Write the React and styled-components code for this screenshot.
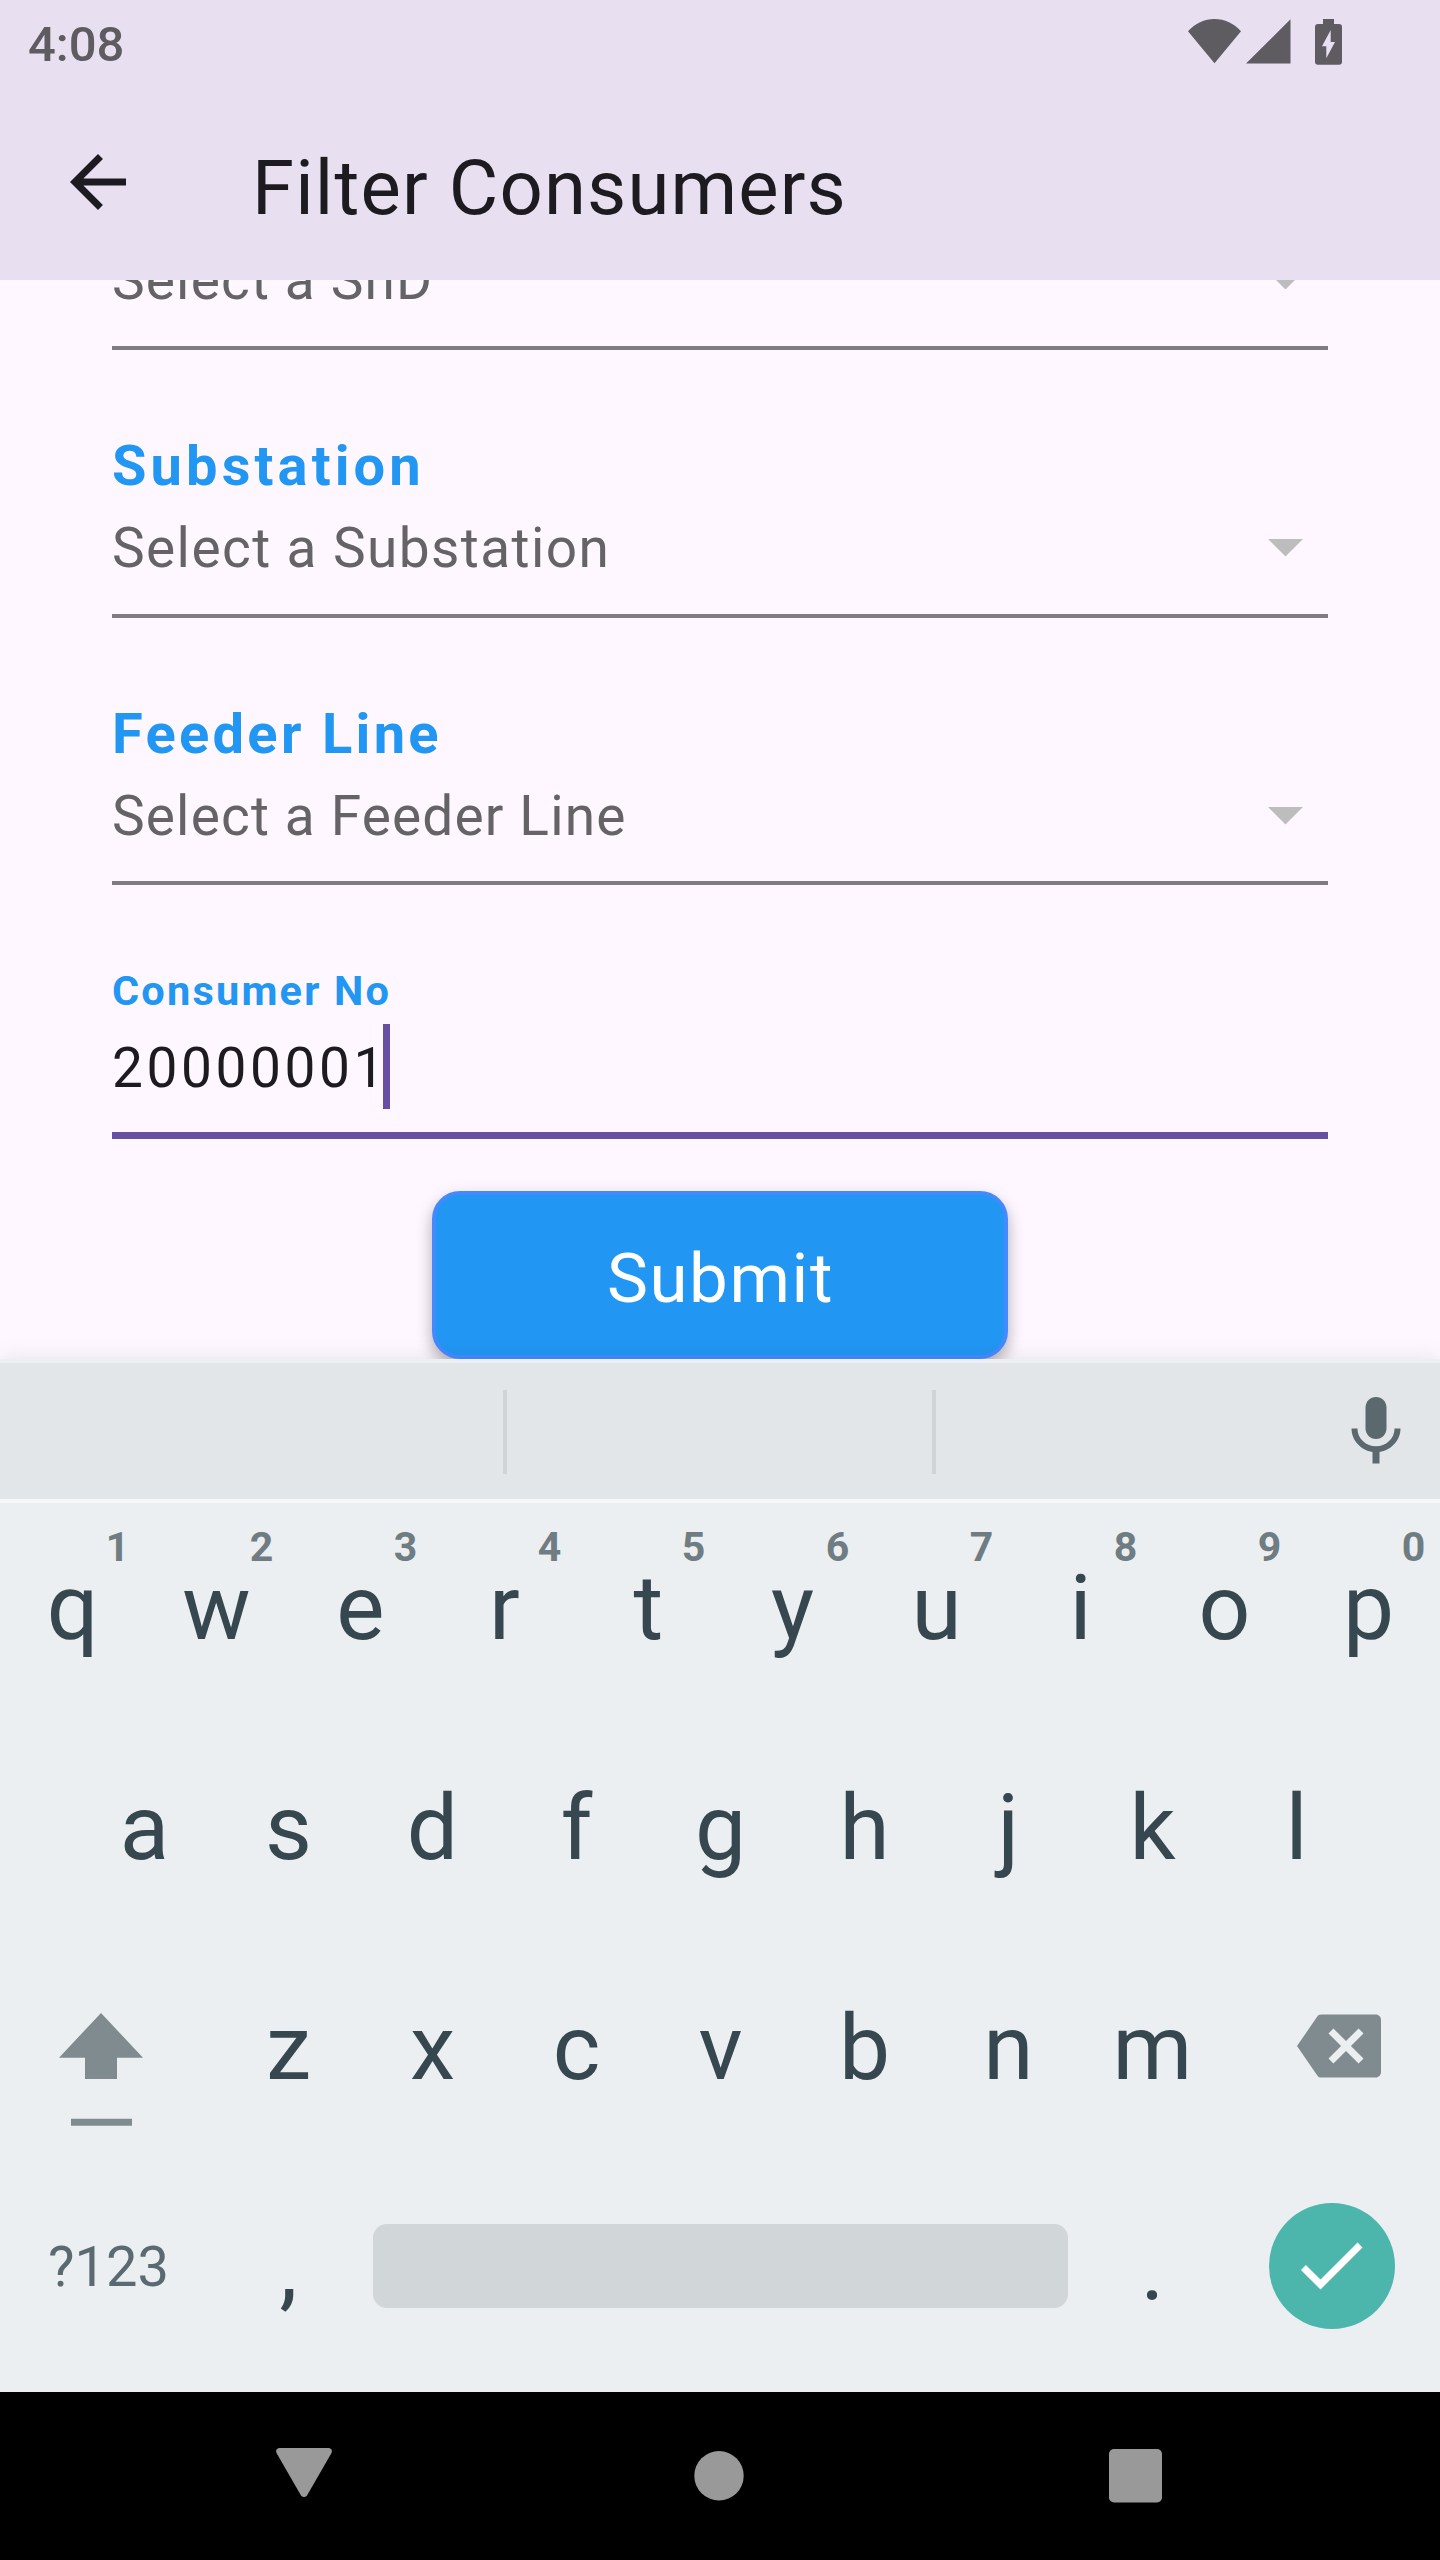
import React from "react";
import styled, { createGlobalStyle } from "styled-components";

const GlobalStyle = createGlobalStyle`
  * { box-sizing: border-box; }
  body { margin: 0; background: #fef7ff; }
`;

const Screen = styled.div`
  width: 1440px;
  height: 2560px;
  display: flex;
  flex-direction: column;
  overflow: hidden;
  background: #fef7ff;
  font-family: Roboto, "Liberation Sans", sans-serif;
`;

const Header = styled.header`
  flex: none;
  height: 280px;
  background: #e8dff0;
`;

const StatusBar = styled.div`
  height: 84px;
  display: flex;
  justify-content: space-between;
  padding: 0 98px 0 28px;
`;

const Clock = styled.span`
  padding-top: 5px;
  font-size: 49px;
  line-height: 79px;
  font-weight: 500;
  color: #5e5b61;
`;

const StatusIcons = styled.div`
  display: flex;
  align-items: flex-start;
  padding-top: 19px;
`;

const StatusIcon = styled.svg`
  display: block;
  margin-left: ${(p) => p.$gap || 0}px;
  fill: #5e5b61;
`;

const AppBar = styled.div`
  height: 196px;
  display: flex;
  align-items: center;
  gap: 112px;
  padding-left: 56px;
`;

const Title = styled.h1`
  margin: 0;
  padding-top: 12px;
  font-size: 76px;
  line-height: 90px;
  font-weight: 400;
  letter-spacing: 1.15px;
  color: #1d1b20;
`;

const Icon = styled.svg`
  display: block;
  flex: none;
  width: 84px;
  height: 84px;
  fill: ${(p) => p.$color};
`;

const Body = styled.main`
  flex: none;
  height: 1079px;
  overflow: hidden;
  padding: 0 112px;
`;

const Form = styled.form`
  display: flex;
  flex-direction: column;
  margin-top: -198px;
`;

const SelectField = styled.div`
  height: 267.75px;
  padding-top: 76.25px;
`;

const Label = styled.div`
  height: ${(p) => (p.$small ? 60 : 80)}px;
  font-size: ${(p) => (p.$small ? 41.5 : 56)}px;
  line-height: ${(p) => (p.$small ? 60 : 80)}px;
  letter-spacing: ${(p) => p.$spacing}px;
  font-weight: 700;
  color: #2196f3;
`;

const SelectRow = styled.div`
  height: 82px;
  display: flex;
  align-items: center;
  justify-content: space-between;
  margin-top: 1px;
  padding-right: 25px;
`;

const Placeholder = styled.span`
  font-size: 55px;
  line-height: 82px;
  letter-spacing: ${(p) => p.$spacing}px;
  color: #656366;
`;

const Caret = styled.svg`
  display: block;
  width: 35px;
  height: 17.5px;
  fill: #bdbdbd;
`;

const Underline = styled.div`
  margin-top: ${(p) => (p.$active ? 23 : 24.5)}px;
  height: ${(p) => (p.$active ? 7 : 4)}px;
  background: ${(p) => (p.$active ? "#6750a4" : "#7f7a84")};
`;

const TextField = styled.div`
  height: 253.75px;
  padding-top: 75.5px;
`;

const InputRow = styled.div`
  display: flex;
  margin-top: 3.5px;
  height: 84.75px;
`;

const InputText = styled.span`
  width: 271px;
  padding-top: 1px;
  font-size: 55px;
  line-height: 86px;
  letter-spacing: 3.6px;
  white-space: nowrap;
  color: #1d1b20;
`;

const TextCursor = styled.span`
  width: 7px;
  height: 84.75px;
  background: #6750a4;
`;

const SubmitButton = styled.button`
  align-self: center;
  width: 576px;
  height: 168px;
  margin: 52px 0 0;
  padding: 7px 0 0 1px;
  border: 4px solid #448aff;
  border-radius: 28px;
  background: #2196f3;
  box-shadow: 0 8px 14px rgba(0, 0, 0, 0.22), 0 6px 20px rgba(0, 0, 0, 0.1);
  font-family: inherit;
  font-size: 69px;
  line-height: 80px;
  letter-spacing: 1.6px;
  color: #fff;
`;

const Keyboard = styled.section`
  position: relative;
  flex: none;
  height: 1033px;
  background: #ebeff2;
  box-shadow: 0 -2px 20px rgba(0, 0, 0, 0.08);
`;

const Suggestions = styled.div`
  height: 144px;
  display: flex;
  align-items: center;
  padding-top: 2px;
  background: #e2e6e9;
  border-top: 4px solid #edf0f2;
  border-bottom: 4px solid #f5f7f9;
`;

const SuggestionSlot = styled.div`
  width: ${(p) => p.$width}px;
  height: 84px;
  border-right: 4px solid #cfd4d7;
`;

const MicSlot = styled.div`
  flex: 1;
  display: flex;
  justify-content: flex-end;
  padding-right: 22px;
`;

const KeyRow = styled.div`
  height: 220px;
  display: flex;
  padding-left: ${(p) => p.$inset || 0}px;
`;

const Key = styled.div`
  position: relative;
  flex: none;
  width: 144px;
  height: 220px;
  padding-left: 1px;
  text-align: center;
  font-size: 91px;
  line-height: 211px;
  color: #37474f;
`;

const Hint = styled.span`
  position: absolute;
  top: 18px;
  right: 0;
  width: 53px;
  font-size: 41px;
  line-height: 52px;
  font-weight: 700;
  color: #6f7c82;
`;

const SideKey = styled.div`
  flex: none;
  width: ${(p) => p.$width}px;
  padding-left: ${(p) => p.$left}px;
  padding-top: ${(p) => p.$top}px;
`;

const SymbolsKey = styled.div`
  flex: none;
  width: 216px;
  padding-left: 1px;
  text-align: center;
  font-size: 56px;
  line-height: 208px;
  color: #5b6a70;
`;

const SpaceKey = styled.div`
  flex: none;
  width: 695px;
  height: 84px;
  margin: 61px 12px 0 13px;
  border-radius: 14px;
  background: #d1d6d9;
`;

const EnterKey = styled.div`
  width: 126px;
  height: 126px;
  margin: 40px 0 0 45px;
  padding: 20px 0 0 20px;
  border-radius: 50%;
  background: #4db6ac;
`;

const ShiftIcon = styled.svg`
  display: block;
  fill: #808b90;
`;

const NavBar = styled.nav`
  flex: none;
  height: 168px;
  display: flex;
  justify-content: space-between;
  align-items: center;
  padding: 0 277px 0 275px;
  background: #000;
`;

const NavIcon = styled.svg`
  display: block;
  width: 58px;
  height: 56px;
  fill: #999;
`;

const SELECTS = [
  { id: "snd", hint: "Select a SnD", spacing: 1.15 },
  { id: "substation", label: "Substation", labelSpacing: 4.1, hint: "Select a Substation", spacing: 1.4 },
  { id: "feeder", label: "Feeder Line", labelSpacing: 3.3, hint: "Select a Feeder Line", spacing: 1.15 },
];

const TOP_KEYS = "qwertyuiop".split("");
const TOP_HINTS = "1234567890".split("");

export default function App() {
  return (
    <Screen>
      <GlobalStyle />
      <Header>
        <StatusBar>
          <Clock>4:08</Clock>
          <StatusIcons>
            <StatusIcon width="53" height="45" viewBox="0 0 53 45">
              <path d="M26.5 44.3 0 12.3C7 4.500 16.500 0 26.500 0S46 4.500 53 12.300z" />
            </StatusIcon>
            <StatusIcon $gap={4.5} width="45" height="45" viewBox="0 0 45 45">
              <path d="M0 44.500 44.500 0.300V44.500z" />
            </StatusIcon>
            <StatusIcon $gap={24.5} width="27" height="46" viewBox="0 0 27 46">
              <path
                fillRule="evenodd"
                d="M8 0h11v5h5a3 3 0 0 1 3 3v34.700a3 3 0 0 1-3 3H3a3 3 0 0 1-3-3V8a3 3 0 0 1 3-3h5zM15.700 11 7 27.300h4.300v12L20 23h-4.300z"
              />
            </StatusIcon>
          </StatusIcons>
        </StatusBar>
        <AppBar>
          <Icon $color="#1d1b20" viewBox="0 0 24 24">
            <path d="M20 11H7.830l5.590-5.590L12 4l-8 8 8 8 1.410-1.410L7.830 13H20v-2z" />
          </Icon>
          <Title>Filter Consumers</Title>
        </AppBar>
      </Header>

      <Body>
        <Form>
          {SELECTS.map((s) => (
            <SelectField key={s.id}>
              <Label $spacing={s.labelSpacing || 0}>{s.label}</Label>
              <SelectRow>
                <Placeholder $spacing={s.spacing}>{s.hint}</Placeholder>
                <Caret viewBox="0 0 10 5">
                  <path d="M0 0l5 5 5-5z" />
                </Caret>
              </SelectRow>
              <Underline />
            </SelectField>
          ))}
          <TextField>
            <Label $small $spacing={2.2}>Consumer No</Label>
            <InputRow>
              <InputText>20000001</InputText>
              <TextCursor />
            </InputRow>
            <Underline $active />
          </TextField>
          <SubmitButton type="button">Submit</SubmitButton>
        </Form>
      </Body>

      <Keyboard>
        <Suggestions>
          <SuggestionSlot $width={507} />
          <SuggestionSlot $width={429} />
          <MicSlot>
            <Icon $color="#5b686e" viewBox="0 0 24 24">
              <path d="M12 14c1.660 0 3-1.340 3-3V5c0-1.660-1.340-3-3-3S9 3.340 9 5v6c0 1.660 1.340 3 3 3z" />
              <path d="M17.300 11c0 3-2.540 5.100-5.300 5.100S6.700 14 6.700 11H5c0 3.410 2.720 6.230 6 6.720V21h2v-3.280c3.280-.48 6-3.300 6-6.720h-1.700z" />
            </Icon>
          </MicSlot>
        </Suggestions>
        <KeyRow>
          {TOP_KEYS.map((k, i) => (
            <Key key={k}>
              {k}
              <Hint>{TOP_HINTS[i]}</Hint>
            </Key>
          ))}
        </KeyRow>
        <KeyRow $inset={72}>
          {"asdfghjkl".split("").map((k) => (
            <Key key={k}>{k}</Key>
          ))}
        </KeyRow>
        <KeyRow>
          <SideKey $width={216} $left={59} $top={70}>
            <ShiftIcon width="84" height="113" viewBox="0 0 84 113">
              <path d="M42 0 84 44.700H58V66H26V44.700H0z" />
              <path d="M12 105.700h61v7H12z" />
            </ShiftIcon>
          </SideKey>
          {"zxcvbnm".split("").map((k) => (
            <Key key={k}>{k}</Key>
          ))}
          <SideKey $width={216} $left={73} $top={60.5}>
            <Icon $color="#808b90" viewBox="0 0 24 24">
              <path d="M22.500 3H7c-.69 0-1 .2-1.350.8L0 12l5.650 8.200c.35.6.66.8 1.350.8h15.500c.8 0 1.500-.7 1.500-1.500v-15c0-.8-.7-1.500-1.500-1.500zM19 15.590 17.590 17 14 13.410 10.410 17 9 15.590 12.590 12 9 8.410 10.410 7 14 10.590 17.590 7 19 8.410 15.410 12z" />
            </Icon>
          </SideKey>
        </KeyRow>
        <KeyRow>
          <SymbolsKey>?123</SymbolsKey>
          <Key>,</Key>
          <SpaceKey />
          <Key>.</Key>
          <EnterKey>
            <Icon $color="#fff" viewBox="0 0 24 24">
              <path d="M9 16.170 4.830 12l-1.420 1.410L9 19 21 7l-1.410-1.410z" />
            </Icon>
          </EnterKey>
        </KeyRow>
      </Keyboard>

      <NavBar>
        <NavIcon viewBox="0 0 58 56">
          <path d="M4 0h50q4 1 2.500 5L32 47.500q-3 3-6 0L1.500 5Q0 1 4 0z" />
        </NavIcon>
        <NavIcon viewBox="0 0 58 56">
          <circle cx="29" cy="27.800" r="24.700" />
        </NavIcon>
        <NavIcon viewBox="0 0 58 56">
          <rect x="4" y="1" width="53" height="53.500" rx="5" />
        </NavIcon>
      </NavBar>
    </Screen>
  );
}
